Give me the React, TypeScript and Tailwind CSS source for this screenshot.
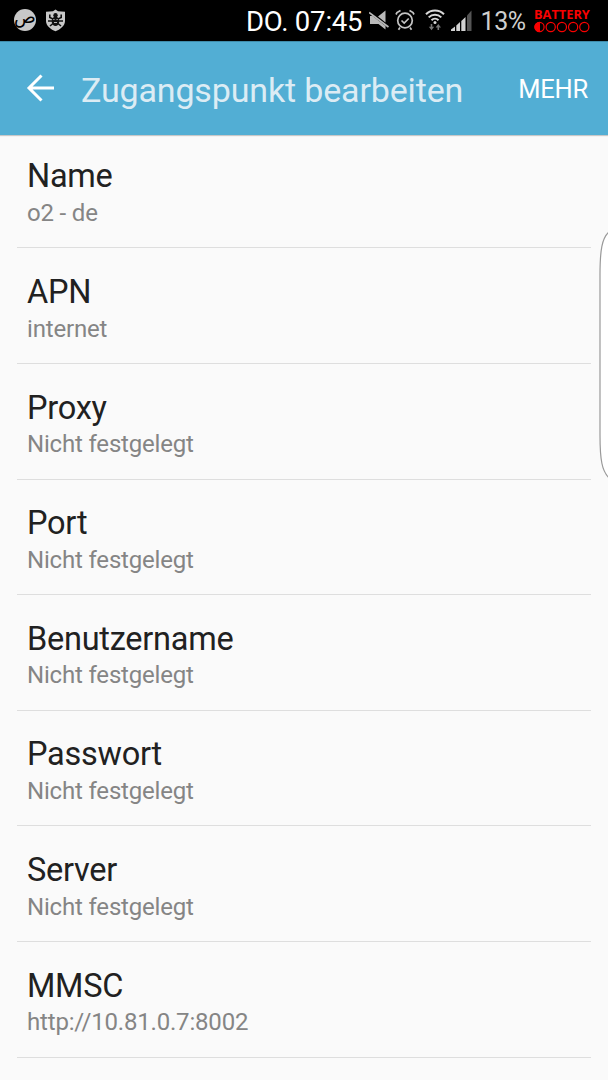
import clsx from 'clsx';

const settings = [
  { label: 'Name', value: 'o2 - de' },
  { label: 'APN', value: 'internet' },
  { label: 'Proxy', value: 'Nicht festgelegt' },
  { label: 'Port', value: 'Nicht festgelegt' },
  { label: 'Benutzername', value: 'Nicht festgelegt' },
  { label: 'Passwort', value: 'Nicht festgelegt' },
  { label: 'Server', value: 'Nicht festgelegt' },
  { label: 'MMSC', value: 'http://10.81.0.7:8002' },
];

function ShieldIcon() {
  return (
    <svg className="ml-[9px] h-[23px] w-[21px]" viewBox="0 0 21 23">
      <path d="M10.5 .5 13 2.200 20 2.800V12c0 5-5 8.500-9.500 10.300C6 20.500 1 17 1 12V2.800L8 2.200Z" fill="#c8c8c8" />
      <ellipse cx="10.500" cy="12.300" rx="3.800" ry="4.800" fill="#111" />
      <circle cx="10.500" cy="6.300" r="2.200" fill="#111" />
      <path d="M8 10 4.800 8.500V5.500M13 10l3.200-1.500V5.500M7.500 12H3M13.500 12H18M8 14.500l-3 2.500M13 14.500l3 2.500" fill="none" stroke="#111" strokeWidth="1.600" />
      <path d="M8.300 10.500h1.200M11.500 10.500h1.200M9 13.500h3" stroke="#c8c8c8" strokeWidth=".9" />
    </svg>
  );
}

function MuteIcon() {
  return (
    <svg className="ml-[7px] h-5 w-5" viewBox="0 0 20 20">
      <path d="M1 6h2.500L16.500 16v3.500L9.500 14H1ZM9 6.500 16.500 .5v12Z" fill="#b9b9b9" />
      <path d="M0 2.500 19.500 17" stroke="#b9b9b9" strokeWidth="1.800" />
    </svg>
  );
}

function AlarmIcon() {
  return (
    <svg className="ml-[6px] h-[22px] w-5" viewBox="0 0 20 22" fill="none" stroke="#c4c4c4">
      <circle cx="10" cy="11.500" r="7.300" strokeWidth="1.700" />
      <path d="m6.500 11.500 2.700 2.500 4.500-4.500M1 5.500 2 3.500 5.500 1.500M19 5.500l-1-2-3.500-2M5 18.500l-1.500 2.200M15 18.500l1.500 2.200" strokeWidth="1.700" />
    </svg>
  );
}

function WifiIcon() {
  return (
    <svg className="ml-[10px] h-[22px] w-5" viewBox="0 0 20 22" fill="none">
      <path d="M1 5.200c5-5 13-5 18 0M3.700 8.400c3.500-3.500 9.100-3.500 12.600 0M6.500 11.300c2-2 5-2 7 0" stroke="#d8d8d8" strokeWidth="2" />
      <circle cx="10" cy="13.500" r="1.500" fill="#d8d8d8" />
      <path d="M6.500 15v4M13.300 21v-4" stroke="#777" strokeWidth="1.600" />
      <path d="M3.800 17.800h5.400L6.500 21.300ZM10.600 18.500H16L13.300 15Z" fill="#777" />
    </svg>
  );
}

function SignalIcon() {
  return (
    <svg className="ml-[6px] h-[21px] w-[21px]" viewBox="0 0 21 21">
      <path d="M0 21v-1.500L4 16.500V21ZM5.300 21v-5.500L9 12v9ZM10.300 21V11L14.500 7v14Z" fill="#d2d2d2" />
      <path d="M16 21V5.500L20.500 .5V21Z" fill="#555" />
    </svg>
  );
}

function Battery() {
  return (
    <div className="ml-[7px] flex w-[57px] flex-col text-[#fa0000]">
      <span className="font-['Open_Sans','Noto_Sans',sans-serif] text-[12.8px] leading-[13px] font-bold">BATTERY</span>
      <svg className="h-3 w-[57px]" viewBox="0 0 57 12" fill="none" stroke="currentColor">
        {[0, 1, 2, 3, 4].map((i) => (
          <circle key={i} cx={5.5 + i * 11.2} cy="6" r="4.600" strokeWidth="1.200" />
        ))}
        <path d="M5.500 1.400a4.600 4.600 0 0 0 0 9.200Z" fill="currentColor" />
      </svg>
    </div>
  );
}

function StatusBar() {
  return (
    <div className="flex h-[40.5px] items-center bg-black pl-[14px]">
      <div className="flex h-[22px] w-[22px] items-center justify-center rounded-full bg-[#c8c8c8] text-[18px] leading-none text-black">
        <span className="mb-[7px] font-['DejaVu_Sans',sans-serif]">ص</span>
      </div>
      <ShieldIcon />
      <span className="ml-[180px] w-[115.500px] pt-[3px] text-[27.5px] leading-8 tracking-[-0.2px] whitespace-nowrap text-white">DO. 07:45</span>
      <MuteIcon />
      <AlarmIcon />
      <WifiIcon />
      <SignalIcon />
      <span className="ml-[9px] w-[46.500px] pt-[3px] text-[25px] leading-8 tracking-[-0.4px] text-[#cfcfcf]">13%</span>
      <Battery />
    </div>
  );
}

function AppBar() {
  return (
    <header className="flex h-[94.500px] items-center border-t border-[#3f8cab] bg-[#52aed4] shadow-[0_1px_1px_rgba(0,0,0,0.2)]">
      <svg className="ml-[26px] h-7 w-7" viewBox="0 0 28 28" fill="none" stroke="white" strokeWidth="3">
        <path d="M28 14H3M15.500 1.500 3 14l12.500 12.500" />
      </svg>
      <h1 className="ml-[27px] flex-1 pt-[3px] text-[34px] leading-10 tracking-[-0.15px] whitespace-nowrap text-[#dcecf4]">Zugangspunkt bearbeiten</h1>
      <button className="mr-5 pt-[2px] text-[25.5px] leading-8 tracking-[-0.2px] text-white">MEHR</button>
    </header>
  );
}

export default function App() {
  return (
    <div className="relative h-[1080px] w-[608px] overflow-hidden bg-[#fafafa] font-[Roboto,sans-serif]">
      <StatusBar />
      <AppBar />
      <main className="px-[17px]">
        {settings.map(({ label, value }, i) => (
          <div
            key={label}
            className={clsx(
              'flex flex-col justify-end border-b border-[#dedede] pb-[18.5px] pl-[10px]',
              i === 0 ? 'h-[113.400px]' : 'h-[115.620px]',
            )}
          >
            <div className="text-[32.5px] leading-10 tracking-[-0.25px] text-[#212121]">{label}</div>
            <div className="pt-[0.5px] text-[24px] leading-8 tracking-[-0.18px] text-[#858585]">{value}</div>
          </div>
        ))}
      </main>
      {/* edge panel handle */}
      <svg className="absolute top-[230px] right-0 h-[250px] w-[10px]" viewBox="0 0 10 250">
        <path d="M11 2C4 8 2 20 2 45V205c0 25 2 36 9 43" fill="#fff" stroke="#999" strokeWidth="1.200" />
      </svg>
    </div>
  );
}
